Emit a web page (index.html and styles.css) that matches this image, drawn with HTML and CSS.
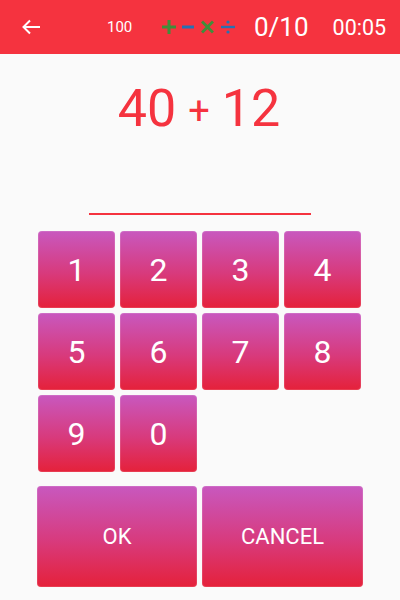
FILE: index.html
```html
<!DOCTYPE html>
<html>
<head>
<meta charset="utf-8">
<link rel="stylesheet" href="styles.css">
</head>
<body>
<div class="app">
  <header class="toolbar">
    <svg class="back" width="20" height="16" viewBox="0 0 20 16"><path d="M19 8H2.5M9 1.5L2.5 8L9 14.5" fill="none" stroke="#fff" stroke-width="2"/></svg>
    <span class="score">100</span>
    <span class="ops">
      <svg width="14" height="14" viewBox="0 0 14 14"><path d="M7 0V14M0 7H14" stroke="#3f8e3a" stroke-width="3"/></svg>
      <svg class="op-minus" width="12" height="14" viewBox="0 0 12 14"><path d="M0 7H12" stroke="#2571b3" stroke-width="3"/></svg>
      <svg class="op-times" width="13" height="14" viewBox="0 0 13 14"><path d="M1 1.5L12 12.5M12 1.5L1 12.5" stroke="#3f8e3a" stroke-width="3"/></svg>
      <svg class="op-div" width="14" height="14" viewBox="0 0 14 14"><path d="M0 7H14" stroke="#2571b3" stroke-width="2.4"/><circle cx="7" cy="2" r="1.6" fill="#2571b3"/><circle cx="7" cy="12" r="1.6" fill="#2571b3"/></svg>
    </span>
    <span class="progress">0/10</span>
    <span class="timer">00:05</span>
  </header>

  <main class="content">
    <div class="equation">
      <span class="num">40</span>
      <span class="op">+</span>
      <span class="num">12</span>
    </div>
    <div class="answer"></div>

    <div class="keypad">
      <button class="key">1</button>
      <button class="key">2</button>
      <button class="key">3</button>
      <button class="key">4</button>
      <button class="key">5</button>
      <button class="key">6</button>
      <button class="key">7</button>
      <button class="key">8</button>
      <button class="key">9</button>
      <button class="key">0</button>
    </div>

    <div class="actions">
      <button class="key action ok">OK</button>
      <button class="key action cancel">CANCEL</button>
    </div>
  </main>
</div>
</body>
</html>
```

FILE: styles.css
```css
* { box-sizing: border-box; }
html, body {
  margin: 0;
  padding: 0;
  background: #fafafa;
  font-family: Roboto, "Liberation Sans", sans-serif;
}
.app {
  width: 400px;
  height: 600px;
  overflow: hidden;
}
.toolbar {
  height: 54px;
  background: #f5333f;
  display: flex;
  align-items: center;
  color: #fff;
}
.back {
  margin-left: 21px;
  flex: none;
}
.score {
  margin-left: 66px;
  font-size: 15px;
  width: 26px;
}
.ops {
  margin-left: 29px;
  display: flex;
  align-items: center;
}
.ops svg { display: block; }
.op-minus { margin-left: 6px; }
.op-times { margin-left: 7px; }
.op-div { margin-left: 7px; }
.progress {
  margin-left: 19px;
  font-size: 26px;
}
.timer {
  margin-left: 24px;
  font-size: 21.5px;
}
.content {
  display: flex;
  flex-direction: column;
  align-items: center;
}
.equation {
  margin-top: 29px;
  height: 52px;
  line-height: 52px;
  display: flex;
  align-items: baseline;
  justify-content: center;
  color: #f5333f;
  margin-right: 2px;
}
.num { font-size: 52px; }
.op {
  font-size: 38px;
  margin: 0 12px 0 12px;
  position: relative;
  top: -2px;
}
.answer {
  width: 222px;
  height: 80px;
  border-bottom: 2px solid #f5333f;
}
.keypad {
  margin-top: 16px;
  margin-right: 1px;
  display: grid;
  grid-template-columns: repeat(4, 77px);
  grid-auto-rows: 77px;
  gap: 5px;
}
.key {
  border: none;
  border-radius: 4px;
  background: linear-gradient(to bottom, #c858bf 0%, #d83a7c 55%, #e5213a 100%);
  color: #fff;
  font-family: Roboto, "Liberation Sans", sans-serif;
  font-size: 32px;
  padding: 0;
  display: flex;
  align-items: center;
  justify-content: center;
  box-shadow: inset 0 0 0 1px rgba(255,255,255,0.12);
}
.actions {
  margin-top: 14px;
  display: grid;
  grid-template-columns: 160px 161px;
  gap: 5px;
}
.action {
  height: 101px;
  font-size: 22px;
}
```
